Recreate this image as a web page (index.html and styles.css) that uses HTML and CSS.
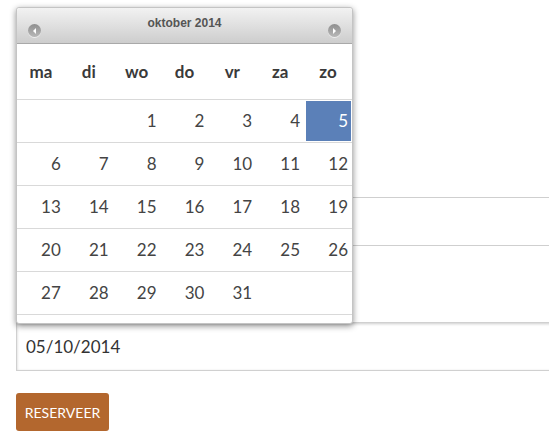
FILE: index.html
```html
<!DOCTYPE html>
<html lang="nl">
<head>
    <meta charset="UTF-8" />
    <meta name="viewport" content="width=device-width, initial-scale=1.0" />
    <title>Reserveren</title>
    <link rel="stylesheet" href="styles.css">
</head>
<body>
    <form class="reserve-form">
        <div class="divider first"></div>
        <div class="divider"></div>
        <input type="text" class="date-input" value="05/10/2014" />
        <button type="submit" class="btn-reserve">Reserveer</button>
    </form>

    <!-- datepicker popup -->
    <div class="datepicker">
        <div class="dp-header">
            <span class="dp-nav prev"><span class="tri"></span></span>
            <span class="dp-title">oktober 2014</span>
            <span class="dp-nav next"><span class="tri"></span></span>
        </div>
        <table class="dp-table">
            <thead>
                <tr>
                    <th>ma</th><th>di</th><th>wo</th><th>do</th><th>vr</th><th>za</th><th>zo</th>
                </tr>
            </thead>
            <tbody>
                <tr><td></td><td></td><td><a>1</a></td><td><a>2</a></td><td><a>3</a></td><td><a>4</a></td><td><a class="active">5</a></td></tr>
                <tr><td><a>6</a></td><td><a>7</a></td><td><a>8</a></td><td><a>9</a></td><td><a>10</a></td><td><a>11</a></td><td><a>12</a></td></tr>
                <tr><td><a>13</a></td><td><a>14</a></td><td><a>15</a></td><td><a>16</a></td><td><a>17</a></td><td><a>18</a></td><td><a>19</a></td></tr>
                <tr><td><a>20</a></td><td><a>21</a></td><td><a>22</a></td><td><a>23</a></td><td><a>24</a></td><td><a>25</a></td><td><a>26</a></td></tr>
                <tr><td><a>27</a></td><td><a>28</a></td><td><a>29</a></td><td><a>30</a></td><td><a>31</a></td><td></td><td></td></tr>
            </tbody>
        </table>
    </div>
</body>
</html>
```

FILE: styles.css
```css
body {
    margin: 0;
    font-family: Lato, "Open Sans", sans-serif;
    background-color: #fff;
    color: #444;
    overflow: hidden;
}

.reserve-form {
    padding-left: 16px;
}

.divider {
    border-top: 1px solid #cfcfcf;
    margin-top: 47px;
}

.divider.first {
    margin-top: 197px;
}

.date-input {
    display: block;
    box-sizing: border-box;
    width: 560px;
    height: 49px;
    margin-top: 76px;
    padding: 0 9px;
    border: 1px solid #d0d0d0;
    box-shadow: inset 0 1px 3px rgba(0, 0, 0, 0.2);
    font-family: Lato, "Open Sans", sans-serif;
    font-size: 17px;
    color: #333;
    outline: none;
}

.btn-reserve {
    display: block;
    margin-top: 22px;
    width: 93px;
    height: 38px;
    padding: 0;
    background-color: #b3672e;
    color: #fff;
    border: none;
    border-radius: 3px;
    font-family: Lato, "Open Sans", sans-serif;
    font-size: 14px;
    text-transform: uppercase;
    cursor: pointer;
}

.datepicker {
    position: absolute;
    left: 16px;
    top: 7px;
    width: 335px;
    background-color: #fff;
    border: 1px solid #c4c4c4;
    border-radius: 3px;
    box-shadow: 0 2px 6px rgba(0, 0, 0, 0.45);
    padding-bottom: 8px;
}

.dp-header {
    height: 35px;
    display: flex;
    align-items: center;
    justify-content: space-between;
    padding: 0 11px;
    background: linear-gradient(#f2f2f2, #cdcdcd);
    border-bottom: 1px solid #a9a9a9;
    border-radius: 3px 3px 0 0;
}

.dp-title {
    font-family: "Liberation Sans", Arial, sans-serif;
    font-size: 12px;
    font-weight: bold;
    color: #555;
    margin-top: -6px;
}

.dp-nav {
    width: 13px;
    height: 13px;
    border-radius: 50%;
    background: linear-gradient(#8e8e8e, #b8b8b8);
    box-shadow: 0 1px 0 rgba(255, 255, 255, 0.6);
    display: flex;
    align-items: center;
    justify-content: center;
    margin-top: 10px;
}

.dp-nav .tri {
    width: 0;
    height: 0;
    border-top: 3px solid transparent;
    border-bottom: 3px solid transparent;
}

.dp-nav.prev .tri {
    border-right: 3px solid #fff;
    margin-left: -1px;
}

.dp-nav.next .tri {
    border-left: 3px solid #fff;
    margin-left: 1px;
}

.dp-table {
    width: 100%;
    border-collapse: collapse;
    table-layout: fixed;
}

.dp-table th {
    height: 55px;
    font-size: 17px;
    font-weight: bold;
    color: #3a3a3a;
    text-align: center;
    padding: 0;
}

.dp-table td {
    border-top: 1px solid #d9d9d9;
    padding: 1px 1px 1px 2px;
    height: 40px;
}

.dp-table tr:last-child td {
    border-bottom: 1px solid #d9d9d9;
}

.dp-table a {
    display: block;
    height: 40px;
    line-height: 40px;
    text-align: right;
    padding-right: 3px;
    font-size: 17px;
    color: #444;
}

.dp-table a.active {
    background-color: #5b80b8;
    color: #fff;
}
```
